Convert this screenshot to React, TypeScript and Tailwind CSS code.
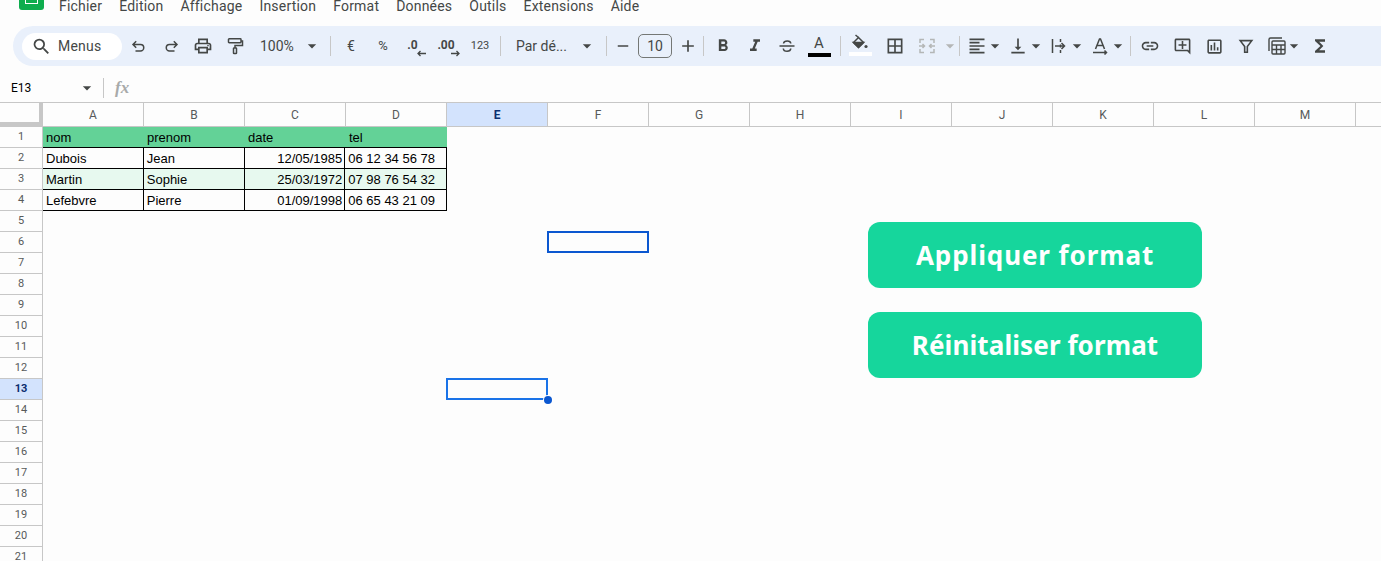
import React from 'react';
import {
  MdSearch, MdOutlinePrint, MdArrowDropDown,
  MdRemove, MdAdd, MdFormatBold, MdFormatItalic,
  MdBorderAll, MdFormatAlignLeft, MdVerticalAlignBottom, MdLink, MdOutlineAddComment,
  MdOutlineInsertChart, MdFunctions,
} from 'react-icons/md';

const menus = ['Fichier', 'Edition', 'Affichage', 'Insertion', 'Format', 'Données', 'Outils', 'Extensions', 'Aide'];
const columns = ['A', 'B', 'C', 'D', 'E', 'F', 'G', 'H', 'I', 'J', 'K', 'L', 'M', ''];
const rows = [
  ['nom', 'prenom', 'date', 'tel'],
  ['Dubois', 'Jean', '12/05/1985', '06 12 34 56 78'],
  ['Martin', 'Sophie', '25/03/1972', '07 98 76 54 32'],
  ['Lefebvre', 'Pierre', '01/09/1998', '06 65 43 21 09'],
];
const rowNumbers = Array.from({ length: 21 }, (_, i) => i + 1);

const Divider = () => <div className="h-5 w-px shrink-0 bg-[#c7c7c7]" />;

const Tool = ({ children }: { children: React.ReactNode }) => (
  <div className="flex h-7 w-8 shrink-0 items-center justify-center text-[#444746]">{children}</div>
);

const Caret = ({ muted }: { muted?: boolean }) => (
  <MdArrowDropDown size={20} className={muted ? 'shrink-0 text-[#b4b6b6]' : 'shrink-0 text-[#444746]'} />
);

const UndoIcon = () => (
  <svg width="18" height="18" viewBox="0 0 18 18" fill="none" stroke="#444746" strokeWidth="1.500">
    <path d="M3 7.500h7.500a3.250 3.250 0 0 1 0 6.500H5.500M6.200 4.300 3 7.500l3.200 3.200" />
  </svg>
);

const RedoIcon = () => (
  <svg width="18" height="18" viewBox="0 0 18 18" fill="none" stroke="#444746" strokeWidth="1.500">
    <path d="M15 7.500H7.500a3.250 3.250 0 0 0 0 6.500h5M11.800 4.300 15 7.500l-3.200 3.200" />
  </svg>
);

const PaintIcon = () => (
  <svg width="18" height="18" viewBox="0 0 18 18" fill="none" stroke="#444746" strokeWidth="1.500">
    <rect x="2.500" y="1.750" width="12.500" height="4" rx=".7" />
    <path d="M15 4h1.500v4.500H9V11" />
    <rect x="7.500" y="11" width="3" height="5.500" rx=".6" />
  </svg>
);

const StrikeIcon = () => (
  <svg width="18" height="18" viewBox="0 0 18 18" fill="none" stroke="#444746" strokeWidth="1.500">
    <path d="M1.500 9h15M5.500 6.500C6 3 12.500 3 12.800 6.500M5.300 11.500c.3 3.800 7.200 3.800 7.500 0" />
  </svg>
);

const FillIcon = () => (
  <svg width="18" height="16" viewBox="0 0 18 16" fill="none" stroke="#444746" strokeWidth="1.500">
    <path d="M2.500 8.500 7.500 3.500l5 5-5 5z" />
    <path d="M2.500 8.500h10l-5 5z" fill="#444746" />
    <path d="M4.500 1l3 2.500" />
    <circle cx="15" cy="12.500" r="1.600" fill="#444746" stroke="none" />
  </svg>
);

const MergeIcon = () => (
  <svg width="18" height="18" viewBox="0 0 18 18" fill="none" stroke="#b4b6b6" strokeWidth="1.500">
    <path d="M2 6V2.500h4M12 2.500h4V6M2 12v3.500h4M12 15.500h4V12" />
    <path d="M1 9h5M4.500 7l2 2-2 2M17 9h-5M13.500 7l-2 2 2 2" />
  </svg>
);

const WrapIcon = () => (
  <svg width="18" height="18" viewBox="0 0 18 18" fill="none" stroke="#444746" strokeWidth="1.500" className="shrink-0">
    <path d="M2.500 2v14M10.500 2v3M10.500 7.500v3M10.500 13v3M5 9h9M11.500 6l3 3-3 3" />
  </svg>
);

const RotateIcon = () => (
  <svg width="18" height="18" viewBox="0 0 18 18" fill="none" stroke="#444746" strokeWidth="1.500" className="shrink-0">
    <path d="M4.500 12 8.500 2h1l4 10M6 8.500h6M2 15.500h13M13.500 13.500l2 2-2 2" />
  </svg>
);

const FilterIcon = () => (
  <svg width="16" height="16" viewBox="0 0 18 18" fill="none" stroke="#444746" strokeWidth="1.800">
    <path d="M2.500 3h13L10.500 9.500V16h-3V9.500z" />
  </svg>
);

const TableIcon = () => (
  <svg width="20" height="20" viewBox="0 0 20 20" fill="none" stroke="#444746" strokeWidth="1.400" className="shrink-0">
    <path d="M2 15V3.500A1.500 1.500 0 0 1 3.500 2H15" />
    <rect x="5" y="5" width="13" height="13" rx="1" />
    <path d="M5 9h13M5 13.500h13M9.500 9v9M14 9v9" />
  </svg>
);

const DecimalArrow = ({ right }: { right?: boolean }) => (
  <svg width="9" height="7" viewBox="0 0 9 7" fill="none" stroke="#444746" strokeWidth="1.300" className="absolute -bottom-[3px] -right-[3px]">
    {right ? <path d="M0 3.500h8M5.500 1l2.500 2.500L5.500 6" /> : <path d="M9 3.500H1M3.500 1 1 3.500 3.500 6" />}
  </svg>
);

const Toolbar = () => (
  <div className="ml-[13px] flex h-10 shrink-0 items-center rounded-l-[20px] bg-[#e9f0fb] pl-[9px] text-[#444746]">
    <div className="flex h-[27px] w-[100px] shrink-0 items-center rounded-full bg-white pl-[9px]">
      <MdSearch size={21} className="shrink-0 text-[#444746]" />
      <span className="ml-[6px] text-[14px] tracking-[0.2px]">Menus</span>
    </div>
    <div className="w-px shrink-0" />
    <Tool><UndoIcon /></Tool>
    <Tool><RedoIcon /></Tool>
    <Tool><MdOutlinePrint size={20} /></Tool>
    <Tool><PaintIcon /></Tool>
    <div className="flex w-[71px] shrink-0 items-center pl-[9px] text-[14px]">
      <span className="w-[44px]">100%</span>
      <Caret />
    </div>
    <div className="w-[8px] shrink-0" />
    <Divider />
    <div className="w-[4px] shrink-0" />
    <Tool><span className="text-[14px]">€</span></Tool>
    <Tool><span className="text-[13px]">%</span></Tool>
    <Tool><span className="relative pr-[5px] pb-[3px] text-[12px] font-bold leading-none">.0<DecimalArrow /></span></Tool>
    <Tool><span className="relative pr-[2px] pb-[3px] text-[12px] font-bold leading-none">.00<DecimalArrow right /></span></Tool>
    <div className="w-[1px] shrink-0" />
    <Tool><span className="text-[11px]">123</span></Tool>
    <div className="w-[4px] shrink-0" />
    <Divider />
    <div className="flex w-[105px] shrink-0 items-center pl-[15px] text-[14px]">
      <span className="w-[61px]">Par dé...</span>
      <Caret />
    </div>
    <Divider />
    <Tool><MdRemove size={18} /></Tool>
    <div className="-ml-px flex h-6 w-[34px] shrink-0 items-center justify-center rounded-[5px] border border-[#747775] text-[14px]">10</div>
    <div className="flex h-7 w-[31px] shrink-0 items-center justify-center"><MdAdd size={20} /></div>
    <Divider />
    <div className="w-[3px] shrink-0" />
    <Tool><MdFormatBold size={20} /></Tool>
    <Tool><MdFormatItalic size={20} /></Tool>
    <Tool><StrikeIcon /></Tool>
    <Tool>
      <div className="flex w-[23px] flex-col items-center">
        <span className="text-[15px] leading-[17px]">A</span>
        <div className="mt-[1px] h-1 w-full bg-black" />
      </div>
    </Tool>
    <div className="w-[5px] shrink-0" />
    <Divider />
    <div className="w-[3px] shrink-0" />
    <Tool>
      <div className="flex w-[23px] flex-col items-center">
        <div className="-mt-[2px]"><FillIcon /></div>
        <div className="mt-[2px] h-1 w-full bg-white" />
      </div>
    </Tool>
    <div className="w-[3px] shrink-0" />
    <Tool><MdBorderAll size={20} /></Tool>
    <Tool><MergeIcon /></Tool>
    <div className="-ml-[3px] w-[18px] shrink-0"><Caret muted /></div>
    <div className="w-[1px] shrink-0" />
    <Divider />
    <div className="flex w-[46px] shrink-0 items-center pl-[7px]"><MdFormatAlignLeft size={20} className="shrink-0" /><div className="-ml-[2px]"><Caret /></div></div>
    <div className="flex w-[40px] shrink-0 items-center pl-[2px]"><MdVerticalAlignBottom size={20} className="shrink-0" /><div className="-ml-[2px]"><Caret /></div></div>
    <div className="flex w-[41px] shrink-0 items-center pl-[4px]"><WrapIcon /><div className="-ml-px"><Caret /></div></div>
    <div className="flex w-[41px] shrink-0 items-center pl-[4px]"><RotateIcon /><div className="-ml-px"><Caret /></div></div>
    <div className="w-[2px] shrink-0" />
    <Divider />
    <div className="w-[3px] shrink-0" />
    <Tool><MdLink size={20} /></Tool>
    <Tool><MdOutlineAddComment size={19} /></Tool>
    <Tool><MdOutlineInsertChart size={19} /></Tool>
    <Tool><FilterIcon /></Tool>
    <div className="flex w-[42px] shrink-0 items-center pl-[5px]"><TableIcon /><div className="-ml-[3px]"><Caret /></div></div>
    <Tool><MdFunctions size={20} /></Tool>
  </div>
);

const Sheet = () => (
  <div className="relative">
    {/* column headers */}
    <div className="flex h-[25px] border-y border-[#c7c7c7]">
      <div className="h-full w-[43px] shrink-0 border-r-[4px] border-b-[4px] border-[#c7c7c7] bg-[#fdfdfd]" />
      {columns.map((col) => (
        <div
          key={col}
          className={
            col === 'E'
              ? 'flex w-[101px] shrink-0 items-center justify-center border-r border-[#c7c7c7] bg-[#d3e3fd] text-[12px] font-bold text-[#0b2e6f]'
              : 'flex w-[101px] shrink-0 items-center justify-center border-r border-[#c7c7c7] text-[12px] text-[#575a5a]'
          }
        >
          {col}
        </div>
      ))}
    </div>

    <div className="flex">
      {/* row numbers */}
      <div className="w-[43px] shrink-0 border-r border-[#c7c7c7]">
        {rowNumbers.map((n) => (
          <div
            key={n}
            className={
              n === 13
                ? 'flex h-[21px] items-center justify-center border-b border-[#c7c7c7] bg-[#d3e3fd] text-[11px] font-bold text-[#0b2e6f]'
                : 'flex h-[21px] items-center justify-center border-b border-[#c7c7c7] text-[11px] text-[#575a5a]'
            }
          >
            {n}
          </div>
        ))}
      </div>

      {/* data table */}
      <div className="font-['Liberation_Sans',sans-serif] text-[13px] text-black">
        {rows.map((row, r) => (
          <div
            key={row[0]}
            className={
              r === 0
                ? 'flex h-[21px] w-[404px] border-b border-black bg-[#63d297]'
                : r === 2
                  ? 'flex h-[21px] w-[404px] border-r border-b border-black bg-[#e7f9ef]'
                  : 'flex h-[21px] w-[404px] border-r border-b border-black'
            }
          >
            {row.map((cell, c) => (
              <div
                key={c}
                className={
                  (c === 3 || r === 0 ? 'w-[101px] ' : 'w-[101px] border-r border-black ') +
                  (r > 0 && c === 2 ? 'pr-[2px] text-right ' : 'pl-[3px] ') +
                  'overflow-hidden leading-[22px] whitespace-nowrap'
                }
              >
                {cell}
              </div>
            ))}
          </div>
        ))}
      </div>
    </div>

    {/* other user's cursor, active cell and the floating buttons sit over the grid */}
    <div className="absolute left-[547px] top-[129px] h-[22px] w-[102px] border-2 border-[#0b57d0]" />
    <div className="absolute left-[446px] top-[276px] h-[22px] w-[102px] border-2 border-[#1a73e8]" />
    <div className="absolute left-[544px] top-[294px] h-2 w-2 rounded-full bg-[#0b57d0] ring-1 ring-white" />

    <div className="absolute left-[868px] top-[120px] flex w-[334px] flex-col gap-6 font-['Noto_Sans',sans-serif] text-[26px] font-bold text-white">
      <div className="flex h-[66px] items-center justify-center rounded-xl bg-[#16d69c] tracking-[0.9px]">Appliquer format</div>
      <div className="flex h-[66px] items-center justify-center rounded-xl bg-[#16d69c] tracking-[0.1px]">Réinitaliser format</div>
    </div>
  </div>
);

export default function App() {
  return (
    <div className="flex h-[561px] w-[1381px] flex-col overflow-hidden bg-[#fdfdfd] font-['Roboto',sans-serif]">
      {/* menu bar, the sheet logo is cut by the top of the window */}
      <div className="flex h-[26px] shrink-0 items-start">
        <div className="ml-[19px] -mt-[20px] h-[30px] w-[25px] shrink-0 rounded-[3px] bg-[#0ead4e] pt-[20px]">
          <div className="mx-auto h-[4px] w-[13px] border border-t-0 border-white" />
        </div>
        <div className="ml-[15px] flex gap-[17px] text-[14px] leading-[12px] tracking-[0.2px] text-[#444746]">
          {menus.map((menu) => (
            <span key={menu}>{menu}</span>
          ))}
        </div>
      </div>

      <Toolbar />

      {/* formula bar */}
      <div className="mt-3 flex h-5 shrink-0 items-center text-[#444746]">
        <span className="ml-[11px] w-[66px] text-[12px] text-black">E13</span>
        <Caret />
        <div className="ml-[6px] h-5 w-px bg-[#c7c7c7]" />
        <span className="ml-[11px] font-['Liberation_Serif',serif] text-[17px] italic font-bold text-[#a8aaaa]">fx</span>
      </div>

      <div className="mt-1">
        <Sheet />
      </div>
    </div>
  );
}
